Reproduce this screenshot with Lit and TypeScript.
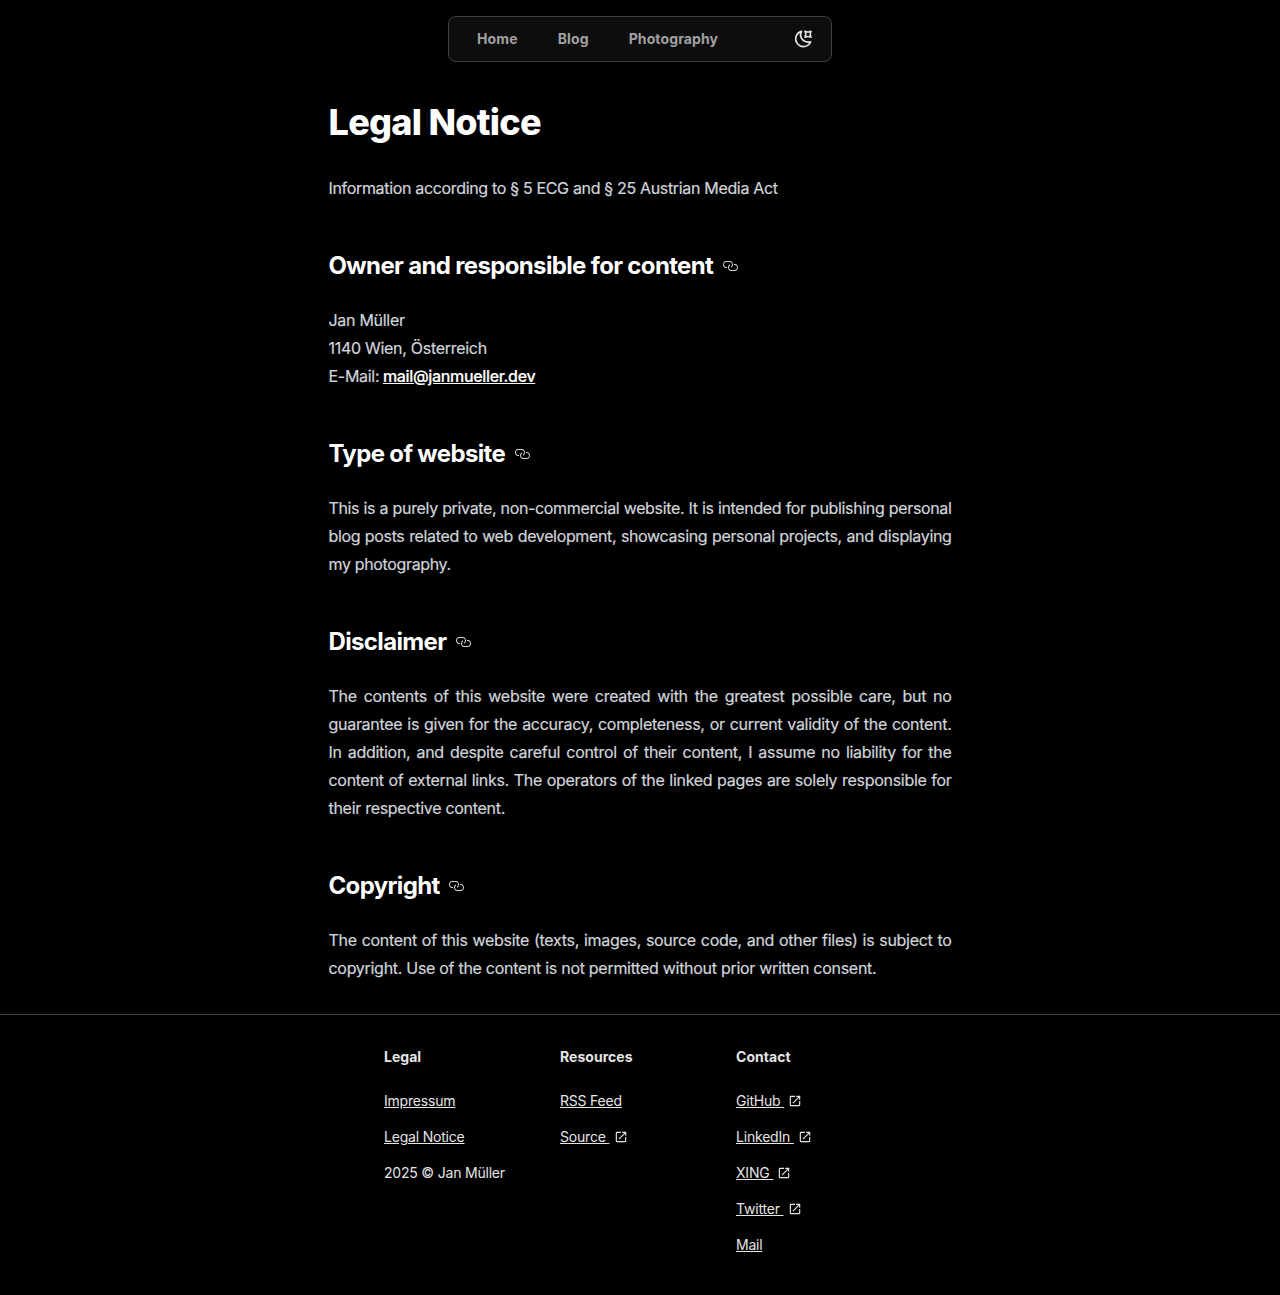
import { LitElement, html, css } from 'lit';
import { customElement } from 'lit/decorators.js';

const chain = html`<svg class="chain" viewBox="0 0 16 16" fill="currentColor"><path d="M4 9h1v1H4c-1.5 0-3-1.69-3-3.5S2.55 3 4 3h4c1.45 0 3 1.69 3 3.5 0 1.41-.91 2.72-2 3.25V8.59c.58-.45 1-1.27 1-2.09C10 5.22 8.98 4 8 4H4c-.98 0-2 1.22-2 2.5S3 9 4 9zm9-3h-1v1h1c1 0 2 1.22 2 2.5S13.98 12 13 12H9c-.98 0-2-1.22-2-2.5 0-.83.42-1.64 1-2.09V6.25c-1.09.53-2 1.84-2 3.25C6 11.31 7.55 13 9 13h4c1.45 0 3-1.69 3-3.5S14.5 6 13 6z"/></svg>`;
const external = html`<svg class="ext" viewBox="0 0 24 24" fill="currentColor"><path d="M19 19H5V5h7V3H5a2 2 0 0 0-2 2v14a2 2 0 0 0 2 2h14c1.1 0 2-.9 2-2v-7h-2v7zM14 3v2h3.59l-9.83 9.83 1.41 1.41L19 6.41V10h2V3h-7z"/></svg>`;

interface FootLink { label: string; external?: boolean }
const columns: { title: string; links: FootLink[]; note?: string }[] = [
  { title: 'Legal', links: [{ label: 'Impressum' }, { label: 'Legal Notice' }], note: '2025 © Jan Müller' },
  { title: 'Resources', links: [{ label: 'RSS Feed' }, { label: 'Source', external: true }] },
  { title: 'Contact', links: [
    { label: 'GitHub', external: true }, { label: 'LinkedIn', external: true },
    { label: 'XING', external: true }, { label: 'Twitter', external: true }, { label: 'Mail' } ] },
];

@customElement('app-root')
export class AppRoot extends LitElement {
  static styles = css`
    :host { display: block; min-height: 1295px; background: #000; color: #d1d5db; font-family: Inter, sans-serif; font-size: 16px; line-height: 28px; }
    * { box-sizing: border-box; }
    .page { display: flex; flex-direction: column; }
    nav { width: 384px; height: 46px; margin: 16px auto 0; border: 1px solid #3f3f3f; border-radius: 8px; background: #0d0d0d; display: flex; align-items: center; gap: 40px; padding: 0 18px 0 28px; font-size: 14px; font-weight: 700; letter-spacing: 0.12px; color: #a1a1a1; }
    .moon { width: 20px; height: 20px; margin-left: auto; color: #e5e5e5; }
    main { width: 623px; margin: 40px 0 0 328.5px; }
    h1 { margin: 0; font-size: 36px; line-height: 40px; font-weight: 800; letter-spacing: -0.72px; color: #fff; }
    p { margin: 20px 0; text-align: justify; letter-spacing: -0.29px; -webkit-text-stroke: 0.2px currentColor; }
    h1 + p { margin-top: 32px; letter-spacing: -0.33px; }
    p.tight { letter-spacing: -0.35px; }
    h2 { margin: 48px 0 24px; font-size: 24px; line-height: 32px; font-weight: 700; letter-spacing: -0.65px; color: #fff; display: flex; align-items: center; gap: 8.5px; }
    .chain { width: 16px; height: 16px; color: #d1d5db; }
    .mail { color: #fff; font-weight: 500; letter-spacing: -0.34px; margin-left: -0.5px; text-decoration: underline; }
    footer { border-top: 1px solid #3f3f3f; margin-top: 12px; padding: 32px 384px 0; display: grid; grid-template-columns: repeat(3, 160px); column-gap: 16px; font-size: 14px; line-height: 20px; letter-spacing: -0.2px; color: #e5e5e5; }
    .col { display: flex; flex-direction: column; gap: 16px; }
    .title { font-weight: 700; letter-spacing: 0.03px; margin-bottom: 8px; }
    .row { display: flex; align-items: center; }
    .row a { text-decoration: underline; white-space: pre; }
    .ext { width: 14px; height: 14px; margin-left: 4.2px; }
  `;

  private heading(text: string) {
    return html`<h2><span>${text}</span>${chain}</h2>`;
  }

  render() {
    return html`<div class="page">
      <nav><span>Home</span><span>Blog</span><span>Photography</span>
        <svg class="moon" viewBox="0 0 24 24" fill="none" stroke="currentColor" stroke-width="2" stroke-linejoin="round"><path d="M10.200 2.800A9.300 9.300 0 1 0 21.200 15.300C13.500 17.500 6.500 10.500 10.200 2.800z"/><path stroke-width="1.800" d="M14.300 2.600Q18 4.800 21.700 2.600Q19.500 6.300 21.700 10Q18 7.800 14.300 10Q16.500 6.300 14.300 2.600z"/></svg>
      </nav>
      <main>
        <h1>Legal Notice</h1>
        <p>Information according to § 5 ECG and § 25 Austrian Media Act</p>
        ${this.heading('Owner and responsible for content')}
        <p>Jan Müller<br>1140 Wien, Österreich<br>E-Mail: <a class="mail">mail@janmueller.dev</a></p>
        ${this.heading('Type of website')}
        <p class="tight">This is a purely private, non-commercial website. It is intended for publishing personal blog posts related to web development, showcasing personal projects, and displaying my photography.</p>
        ${this.heading('Disclaimer')}
        <p>The contents of this website were created with the greatest possible care, but no guarantee is given for the accuracy, completeness, or current validity of the content. In addition, and despite careful control of their content, I assume no liability for the content of external links. The operators of the linked pages are solely responsible for their respective content.</p>
        ${this.heading('Copyright')}
        <p>The content of this website (texts, images, source code, and other files) is subject to copyright. Use of the content is not permitted without prior written consent.</p>
      </main>
      <footer>${columns.map(c => html`<div class="col"><div class="title">${c.title}</div>
        ${c.links.map(l => html`<div class="row"><a>${l.external ? l.label + ' ' : l.label}</a>${l.external ? external : ''}</div>`)}
        ${c.note ? html`<div>${c.note}</div>` : ''}</div>`)}
      </footer>
    </div>`;
  }
}
